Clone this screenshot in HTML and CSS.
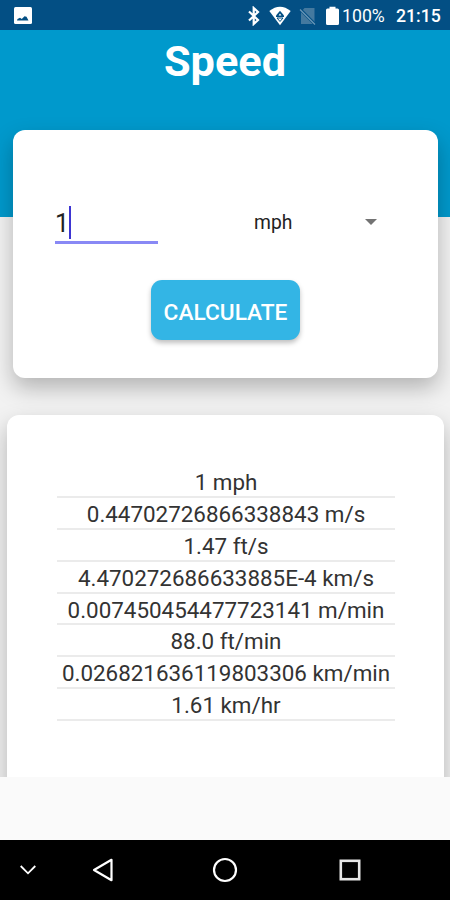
FILE: index.html
```html
<!DOCTYPE html>
<html lang="en">
<head>
    <meta charset="UTF-8">
    <meta name="viewport" content="width=device-width, initial-scale=1.0">
    <title>Speed</title>
    <link rel="stylesheet" href="styles.css">
</head>
<body>
    <div class="status-bar">
        <svg class="icon-image" viewBox="0 0 18 17" width="18" height="17">
            <rect width="18" height="17" rx="1.5" fill="#fff"/>
            <path d="M3 13.5 L3.5 12 L6 10.7 L7.8 12 L10.5 9.3 L12.5 9.8 L14.5 13.5 Z" fill="#034f84"/>
        </svg>
        <div class="status-icons">
            <svg class="icon-bluetooth" viewBox="0 0 14 20" width="14" height="20">
                <path d="M2 5.5 L11 14 L6.7 18 V2 L11 6 L2 14.5" fill="none" stroke="#fff" stroke-width="2.2"/>
            </svg>
            <svg class="icon-wifi" viewBox="0 0 22 20" width="22" height="20">
                <path d="M0.3 5 Q11 -3.6 21.7 5 L11 19.3 Z" fill="#fff"/>
                <path d="M7 9.4 L11 4.8 L15 9.4 V11 H7 Z" fill="#034f84"/>
                <path d="M9.6 9.5 L11 7.5 L12.4 9.5 Z" fill="#fff"/>
                <path d="M8 12 H14 L11 15.5 Z" fill="none" stroke="#034f84"/>
            </svg>
            <svg class="icon-sim" viewBox="0 0 18 20" width="18" height="20">
                <path d="M5.5 2 H15.5 V18 H2 V6 Z" fill="#44799f"/>
                <path d="M0.5 2.5 L16.5 18.7" stroke="#034f84" stroke-width="3"/>
                <path d="M1 3.5 L16 18.5" stroke="#6c98b7" stroke-width="1.3"/>
            </svg>
            <svg class="icon-battery" viewBox="0 0 13 20" width="13" height="20">
                <path d="M3.5 0.7 H9.5 V2.5 H11.5 Q13 2.5 13 4 V17.5 Q13 19 11.5 19 H1.5 Q0 19 0 17.5 V4 Q0 2.5 1.5 2.5 H3.5 Z" fill="#fff"/>
            </svg>
            <span class="battery">100%</span>
            <span class="clock">21:15</span>
        </div>
    </div>
    <div class="screen">
        <h1 class="header">Speed</h1>
        <div class="card input-card">
            <div class="fields">
                <div class="value"><span>1</span><span class="caret"></span></div>
                <div class="unit">
                    <span>mph</span>
                    <svg viewBox="0 0 12 6" width="12" height="6"><path d="M0 0 H12 L6 6 Z" fill="#737373"/></svg>
                </div>
            </div>
            <button class="calculate">CALCULATE</button>
        </div>
        <div class="card results">
            <ul>
                <li>1 mph</li>
                <li>0.44702726866338843 m/s</li>
                <li>1.47 ft/s</li>
                <li>4.470272686633885E-4 km/s</li>
                <li>0.007450454477723141 m/min</li>
                <li>88.0 ft/min</li>
                <li>0.026821636119803306 km/min</li>
                <li>1.61 km/hr</li>
            </ul>
        </div>
    </div>
    <div class="nav-bar">
        <svg class="nav-hide" viewBox="0 0 16 10" width="16" height="10">
            <path d="M0.7 1 L8 8.3 L15.3 1" fill="none" stroke="#fff" stroke-width="1.8"/>
        </svg>
        <svg class="nav-back" viewBox="0 0 22 24" width="22" height="24">
            <path d="M2 12 L19.5 1.8 V22.2 Z" fill="none" stroke="#fff" stroke-width="2.2" stroke-linejoin="round"/>
        </svg>
        <svg class="nav-home" viewBox="0 0 26 26" width="26" height="26">
            <circle cx="13" cy="13" r="11" fill="none" stroke="#fff" stroke-width="2.2"/>
        </svg>
        <svg class="nav-recent" viewBox="0 0 22 22" width="22" height="22">
            <rect x="1.8" y="1.8" width="18.4" height="18.4" fill="none" stroke="#e6e6e6" stroke-width="2.6"/>
        </svg>
    </div>
</body>
</html>
```
FILE: styles.css
```css
body {
    display: flex;
    flex-direction: column;
    height: 900px;
    margin: 0;
    background-color: #fafafa;
    font-family: Roboto, sans-serif;
}

svg {
    display: block;
    flex: none;
}

.status-bar {
    display: flex;
    justify-content: space-between;
    align-items: center;
    box-sizing: border-box;
    height: 30px;
    padding: 1px 10px 0 14px;
    background-color: #034f84;
    color: #fff;
}

.status-icons {
    display: flex;
    align-items: center;
    height: 29px;
}

.icon-bluetooth {
    margin-right: 1px;
}

.icon-wifi {
    margin-left: 7px;
}

.icon-sim {
    margin-left: 8px;
}

.icon-battery {
    margin-left: 9px;
}

.battery {
    width: 42px;
    margin-left: 3px;
    font-size: 17.7px;
    line-height: 32px;
}

.clock {
    width: 44px;
    margin-left: 12px;
    font-size: 17.7px;
    font-weight: 500;
    line-height: 32px;
}

.screen {
    height: 747px;
    overflow: hidden;
    background-color: #f2f2f2;
}

.header {
    height: 187px;
    margin: 0;
    background-color: #0099cc;
    color: #fff;
    font-size: 43.3px;
    font-weight: 700;
    line-height: 64px;
    text-align: center;
}

.card {
    box-sizing: border-box;
    background-color: #fff;
}

.input-card {
    height: 248px;
    margin: -87px 12px 0 13px;
    padding: 74px 61px 0 42px;
    border-radius: 12px;
    box-shadow: 0 10px 22px rgba(0, 0, 0, 0.26);
}

.fields {
    display: flex;
    justify-content: space-between;
    height: 40px;
}

.value {
    display: flex;
    align-items: center;
    width: 103px;
    border-bottom: 3px solid #8989f5;
    color: #222;
    font-size: 25px;
    line-height: 40px;
}

.value span:first-child {
    padding-top: 3px;
}

.caret {
    width: 2px;
    height: 33px;
    background-color: #3d35d2;
}

.unit {
    display: flex;
    justify-content: space-between;
    align-items: center;
    width: 123px;
    height: 36px;
    color: #222;
    font-size: 19.3px;
}

.calculate {
    display: block;
    width: 149px;
    height: 60px;
    margin: 36px 0 0 96px;
    padding: 1px 0 0;
    border: none;
    border-radius: 11px;
    background-color: #33b5e5;
    box-shadow: 0 3px 5px rgba(0, 0, 0, 0.25);
    color: #fff;
    font-family: inherit;
    font-size: 22.7px;
    font-weight: 500;
    line-height: 63px;
}

.results {
    height: 380px;
    margin: 37px 6px 0 7px;
    padding: 51px 49px 0 50px;
    border-radius: 12px;
    box-shadow: 0 10px 22px rgba(0, 0, 0, 0.26);
}

.results ul {
    margin: 0;
    padding: 0;
    list-style: none;
}

.results li {
    box-sizing: border-box;
    height: 31.9px;
    border-bottom: 2px solid #ebebeb;
    color: #333;
    font-size: 22.4px;
    line-height: 32px;
    text-align: center;
    white-space: nowrap;
}

.nav-bar {
    display: flex;
    align-items: center;
    height: 60px;
    margin-top: auto;
    padding-left: 20px;
    background-color: #000;
}

.nav-back {
    margin-left: 56px;
}

.nav-home {
    margin-left: 98px;
}

.nav-recent {
    margin-left: 101px;
}
```
